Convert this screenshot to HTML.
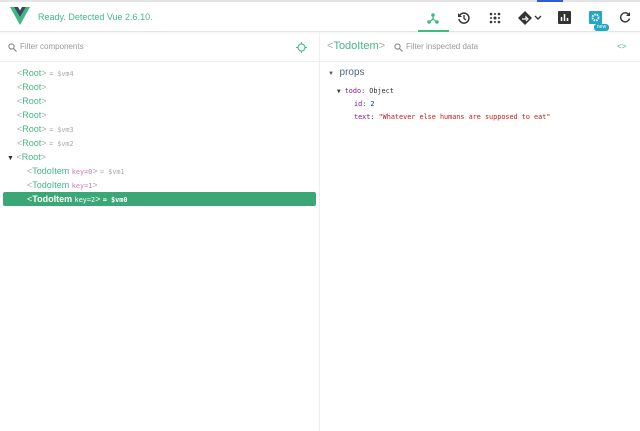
<!DOCTYPE html>
<html><head><meta charset="utf-8"><style>
*{margin:0;padding:0;box-sizing:border-box}
body{width:640px;height:431px;background:#fff;font-family:"Liberation Sans",sans-serif;position:relative;overflow:hidden}
.hdr{position:absolute;left:0;top:0;width:640px;height:32px;border-top:2px solid #e4e4e4;border-bottom:1px solid #e6e6e6;box-shadow:0 1px 2px rgba(0,0,0,.05)}
.title{position:absolute;left:38px;top:10px;font-size:9px;color:#42b983}
.ic{position:absolute;top:9px}
.filter{position:absolute;top:32px;height:30px;border-bottom:1px solid #eee;font-size:8px;color:#999}
.div{position:absolute;left:319px;top:32px;width:1px;height:399px;background:#eee}
.mono{font-family:"DejaVu Sans Mono","Liberation Mono",monospace;font-size:6.8px}
.row{position:absolute;left:0;height:14px;line-height:14px;font-size:9px;color:#42b983;white-space:nowrap}
.row .b{color:#aaa}.row .v{color:#aaa}.row .k{color:#cc7ab8}
.sel{background:#3ba776;color:#fff;left:3px;width:313px;border-radius:2px}
.sel .b,.sel .v,.sel .k{color:#fff}
</style></head><body>
<div style="position:absolute;left:537px;top:0;width:26px;height:2px;background:#2b5ed8;z-index:2"></div>
<div class="hdr">
<svg style="position:absolute;left:10px;top:5px" width="20" height="18" viewBox="0 0 20 18"><path d="M0 0h4l6 10 6-10h4L10 18z" fill="#41b883"/><path d="M4 0h4l2 3.5L12 0h4l-6 10z" fill="#34495e"/></svg>
<div class="title">Ready. Detected Vue 2.6.10.</div>
<div style="position:absolute;left:418px;top:28px;width:31px;height:2px;background:#42b983"></div>
<svg class="ic" style="left:426px" width="14" height="14" viewBox="0 0 14 14"><circle cx="7" cy="4" r="1.8" fill="#42b983"/><circle cx="3" cy="11" r="1.8" fill="#42b983"/><circle cx="11" cy="11" r="1.8" fill="#42b983"/><path d="M7 4v4L3 11M7 8l4 3" stroke="#42b983" stroke-width="1.3" fill="none"/></svg>
<svg class="ic" style="left:457px" width="14" height="14" viewBox="0 0 14 14"><path d="M3 4A5 5 0 1 1 2 8" stroke="#333" stroke-width="1.5" fill="none"/><path d="M1 2v4h4z" fill="#333"/><path d="M7 4v3.5l2 1.5" stroke="#333" stroke-width="1.3" fill="none"/></svg>
<svg class="ic" style="left:488px" width="14" height="14" viewBox="0 0 14 14" fill="#333"><circle cx="3" cy="3" r="1.3"/><circle cx="11" cy="3" r="1.3"/><circle cx="7" cy="7" r="1.5"/><circle cx="3" cy="11" r="1.3"/><circle cx="11" cy="11" r="1.3"/><circle cx="7" cy="3" r="1"/><circle cx="7" cy="11" r="1"/><circle cx="3" cy="7" r="1"/><circle cx="11" cy="7" r="1"/></svg>
<svg class="ic" style="left:518px" width="26" height="14" viewBox="0 0 26 14"><path d="M7 0l7 7-7 7-7-7z" fill="#333"/><path d="M4 8h4V6l2 2-2 2" stroke="#fff" stroke-width="1.2" fill="none"/><path d="M17 5l3 3 3-3" stroke="#333" stroke-width="1.4" fill="none"/></svg>
<svg class="ic" style="left:558px" width="13" height="13" viewBox="0 0 13 13"><rect width="13" height="13" rx="1" fill="#333"/><path d="M3.5 10V6M6.5 10V3M9.5 10V7" stroke="#fff" stroke-width="1.5"/></svg>
<svg class="ic" style="left:589px" width="13" height="13" viewBox="0 0 13 13"><rect width="13" height="13" rx="1" fill="#22a7c4"/><circle cx="6.5" cy="6.5" r="3" fill="none" stroke="#fff" stroke-width="1.8" stroke-dasharray="1.5 1"/></svg>
<div style="position:absolute;left:594px;top:22px;width:15px;height:7px;background:#22a7c4;border-radius:3px;color:#fff;font-size:5px;text-align:center;line-height:7px">new</div>
<svg class="ic" style="left:619px" width="12" height="12" viewBox="0 0 12 12"><path d="M10 4A4.5 4.5 0 1 0 10.5 7.5" stroke="#333" stroke-width="1.4" fill="none"/><path d="M11 1v4H7z" fill="#333"/></svg>
</div>
<div class="filter" style="left:0;width:319px">
<svg style="position:absolute;left:8px;top:11px" width="9" height="9" viewBox="0 0 9 9"><circle cx="3.5" cy="3.5" r="2.6" stroke="#888" stroke-width="1.1" fill="none"/><path d="M5.5 5.5L8.5 8.5" stroke="#888" stroke-width="1.2"/></svg>
<span style="position:absolute;left:20px;top:10px">Filter components</span>
<svg style="position:absolute;left:296px;top:10px" width="11" height="11" viewBox="0 0 11 11"><circle cx="5.5" cy="5.5" r="3.5" stroke="#42b983" stroke-width="1.1" fill="none"/><path d="M5.5 0v2M5.5 9v2M0 5.5h2M9 5.5h2" stroke="#42b983" stroke-width="1.1"/></svg>
</div>
<div class="filter" style="left:320px;width:320px">
<span style="position:absolute;left:7px;top:8px;font-size:11px;color:#42b983"><span style="color:#aaa">&lt;</span>TodoItem<span style="color:#aaa">&gt;</span></span>
<svg style="position:absolute;left:74px;top:11px" width="9" height="9" viewBox="0 0 9 9"><circle cx="3.5" cy="3.5" r="2.6" stroke="#888" stroke-width="1.1" fill="none"/><path d="M5.5 5.5L8.5 8.5" stroke="#888" stroke-width="1.2"/></svg>
<span style="position:absolute;left:86px;top:10px">Filter inspected data</span>
<span style="position:absolute;left:297px;top:10px;color:#42b983;font-size:8px">&lt;&gt;</span>
</div>
<div class="div"></div>
<div class="row" style="top:66px;left:17px"><span class="b">&lt;</span>Root<span class="b">&gt;</span> <span class="v mono">= $vm4</span></div>
<div class="row" style="top:80px;left:17px"><span class="b">&lt;</span>Root<span class="b">&gt;</span></div>
<div class="row" style="top:94px;left:17px"><span class="b">&lt;</span>Root<span class="b">&gt;</span></div>
<div class="row" style="top:108px;left:17px"><span class="b">&lt;</span>Root<span class="b">&gt;</span></div>
<div class="row" style="top:122px;left:17px"><span class="b">&lt;</span>Root<span class="b">&gt;</span> <span class="v mono">= $vm3</span></div>
<div class="row" style="top:136px;left:17px"><span class="b">&lt;</span>Root<span class="b">&gt;</span> <span class="v mono">= $vm2</span></div>
<div class="row" style="top:150px;left:7px"><span style="color:#333;font-size:7px">▼</span> <span class="b">&lt;</span>Root<span class="b">&gt;</span></div>
<div class="row" style="top:164px;left:27px"><span class="b">&lt;</span>TodoItem <span class="k mono">key=0</span><span class="b">&gt;</span> <span class="v mono">= $vm1</span></div>
<div class="row" style="top:178px;left:27px"><span class="b">&lt;</span>TodoItem <span class="k mono">key=1</span><span class="b">&gt;</span></div>
<div class="row sel" style="top:192px;padding-left:24px"><span class="b">&lt;</span><b>TodoItem</b> <span class="k mono">key=2</span><span class="b">&gt;</span> <span class="v mono"><b>= $vm0</b></span></div>
<div style="position:absolute;left:328px;top:67px;font-size:10px;color:#486887"><span style="font-size:6px;color:#555">▼</span>&nbsp; props</div>
<div class="mono" style="position:absolute;left:337px;top:85px;color:#881391;line-height:13px">
<div><span style="color:#333;font-size:6px">▼</span> todo<span style="color:#333">: Object</span></div>
<div style="padding-left:17px">id<span style="color:#333">: </span><span style="color:#03c">2</span></div>
<div style="padding-left:17px">text<span style="color:#333">: </span><span style="color:#c41a16">"Whatever else humans are supposed to eat"</span></div>
</div>
</body></html>
